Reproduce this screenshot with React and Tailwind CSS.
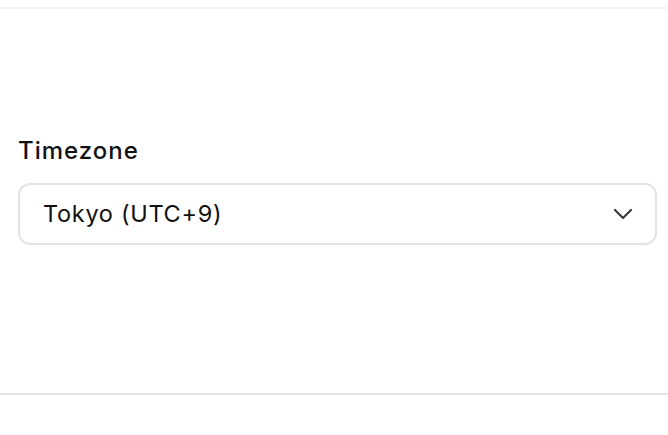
export default function App() {
  return (
    <div className="w-[668px] h-[435px] bg-white flex flex-col" style={{ fontFamily: 'Inter, sans-serif' }}>
      <div className="mt-[7px] h-[2px] bg-[#f3f3f3]" />
      <div className="flex-1 flex flex-col pl-[18px] pr-[11px] pt-[128px]">
        <div className="text-[24px] leading-[28px] font-medium tracking-[1px] text-[#111]">Timezone</div>
        <div className="mt-[18px] h-[62px] rounded-[12px] border-2 border-[#e3e3e3] flex items-center justify-between pl-[23px] pr-[22px]">
          <span className="text-[23.5px] tracking-[0.7px] text-[#111]">Tokyo (UTC+9)</span>
          <svg width="20" height="12" viewBox="0 0 20 12" fill="none">
            <path d="M2 2l8 8 8-8" stroke="#3c3a3f" strokeWidth="2.2" strokeLinecap="round" strokeLinejoin="round" />
          </svg>
        </div>
      </div>
      <div className="mb-[40px] h-[2px] bg-[#e5e5e5]" />
    </div>
  );
}
